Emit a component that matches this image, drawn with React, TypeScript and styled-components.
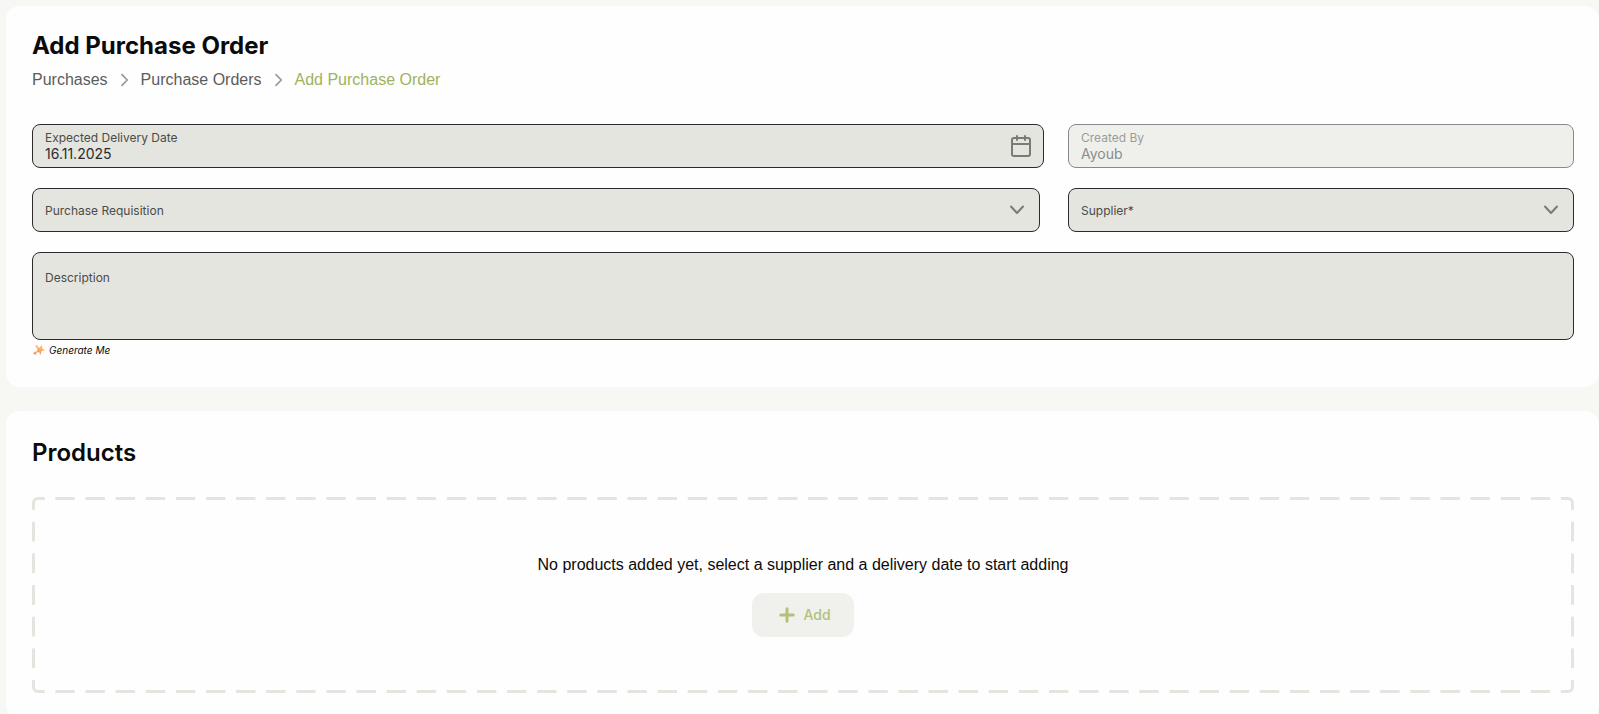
import React from "react";
import styled, { createGlobalStyle } from "styled-components";

const GlobalStyle = createGlobalStyle`
  *, *::before, *::after { box-sizing: border-box; }
  html { scrollbar-width: none; }
  body {
    margin: 0;
    background: #f7f8f3;
    color: #0b0b0b;
    font-family: "Liberation Sans", Arial, sans-serif;
    font-size: 16px;
    line-height: 24px;
  }
`;

const Page = styled.main`
  display: flex;
  flex-direction: column;
  gap: 24px;
  padding: 6px 0 6px 6px;
`;

const Card = styled.section`
  background: #fefefe;
  border-radius: 14px;
  padding: 24px 25px 26px 26px;
`;

const Title = styled.h1`
  margin: 0;
  font: 700 24px/32px Inter, sans-serif;
`;

const Subtitle = styled.h2`
  margin: 2px 0 28px;
  font: 600 24px/32px Inter, sans-serif;
`;

const Breadcrumb = styled.nav`
  display: flex;
  align-items: center;
  gap: 12px;
  margin: 6px 0 32px;
`;

const Crumb = styled.a<{ $current?: boolean }>`
  color: ${(p) => (p.$current ? "#a0b25c" : "#5c5c5c")};
  text-decoration: none;
`;

const Form = styled.form`
  display: grid;
  grid-template-columns: 2fr 1fr;
  gap: 20px 24px;
`;

const Field = styled.div<{ $disabled?: boolean; $inset?: boolean }>`
  display: grid;
  grid-template-columns: 1fr auto;
  align-items: center;
  height: 44px;
  margin-right: ${(p) => (p.$inset ? "4px" : "0")};
  padding: 0 12px;
  border: 1px solid #2b2b2b;
  border-radius: 8px;
  background: #e4e5df;
  color: #7a7a76;
  opacity: ${(p) => (p.$disabled ? 0.55 : 1)};
`;

const Stack = styled.div`
  display: flex;
  flex-direction: column;
  min-width: 0;
`;

const Label = styled.label`
  color: #4b4b49;
  font: 12px/16px Inter, sans-serif;
`;

const TextInput = styled.input`
  width: 100%;
  height: 16px;
  padding: 0;
  border: 0;
  outline: 0;
  background: transparent;
  color: #2b2b2b;
  font: 14px/16px Inter, sans-serif;
`;

const SelectLabel = styled(Label)`
  grid-area: 1 / 1;
  padding-top: 2px;
  pointer-events: none;
`;

const Select = styled.select`
  grid-area: 1 / 1 / 2 / 3;
  width: 100%;
  height: 42px;
  border: 0;
  outline: 0;
  appearance: none;
  background: transparent;
  color: #2b2b2b;
  font: 14px/16px Inter, sans-serif;
`;

const SelectIcon = styled.svg`
  grid-area: 1 / 2;
  margin-right: 2px;
  pointer-events: none;
`;

const Wide = styled.div`
  grid-column: 1 / -1;
`;

const AreaField = styled.div`
  display: flex;
  flex-direction: column;
  height: 88px;
  padding: 17px 12px 6px;
  border: 1px solid #2b2b2b;
  border-radius: 8px;
  background: #e4e5df;
`;

const TextArea = styled.textarea`
  flex: 1;
  padding: 0;
  border: 0;
  outline: 0;
  resize: none;
  background: transparent;
  font: 14px/16px Inter, sans-serif;
`;

const GenerateButton = styled.button`
  display: flex;
  align-items: center;
  gap: 4px;
  margin: 2px 0 3px;
  padding: 0 1px;
  border: 0;
  background: none;
  color: #0b0b0b;
  cursor: pointer;
  font: italic 10px/16px Inter, sans-serif;
`;

const EmptyState = styled.div`
  position: relative;
  display: flex;
  flex-direction: column;
  align-items: center;
  justify-content: center;
  gap: 16px;
  height: 196px;
  border: 3px solid #e4e5df;
  border-radius: 6px;

  /* Gaps that break the outline into long dashes. */
  &::before,
  &::after {
    content: "";
    position: absolute;
    pointer-events: none;
    --stops: transparent 10px, #fefefe 10px calc(100% - 10px), transparent calc(100% - 10px);
  }
  &::before {
    inset: -3px 0;
    background:
      linear-gradient(90deg, var(--stops)) left top / 30px 3px round no-repeat,
      linear-gradient(90deg, var(--stops)) left bottom / 30px 3px round no-repeat;
  }
  &::after {
    inset: 0 -3px;
    background:
      linear-gradient(180deg, var(--stops)) left top / 3px 30px no-repeat round,
      linear-gradient(180deg, var(--stops)) right top / 3px 30px no-repeat round;
  }
`;

const Message = styled.p`
  margin: 0;
`;

const AddButton = styled.button`
  display: flex;
  align-items: center;
  justify-content: center;
  gap: 8px;
  height: 44px;
  padding: 0 23px 0 27px;
  border: 0;
  border-radius: 12px;
  background: #f0f1ed;
  color: #b2c07c;
  font: 500 14px/20px Inter, sans-serif;
`;

const CrumbChevron = () => (
  <svg width="9" height="14" viewBox="0 0 9 14" fill="none" stroke="#9a9a9a" strokeWidth="1.7" aria-hidden="true">
    <path d="M1.500 1.200 7.200 7 1.500 12.800" />
  </svg>
);

const DownChevron = () => (
  <SelectIcon width="16" height="10" viewBox="0 0 16 10" fill="none" stroke="currentColor" strokeWidth="2" strokeLinecap="round" strokeLinejoin="round" aria-hidden="true">
    <path d="M2 1.500 8 8l6-6.500" />
  </SelectIcon>
);

const CalendarIcon = () => (
  <svg width="20" height="22" viewBox="0 0 20 22" fill="none" stroke="currentColor" strokeWidth="2" strokeLinecap="round" strokeLinejoin="round" aria-hidden="true">
    <rect x="1" y="3" width="18" height="18" rx="2" />
    <path d="M6 1v4M14 1v4M1 9h18" />
  </svg>
);

const SparkIcon = () => (
  <svg width="12" height="12" viewBox="0 0 24 24" aria-hidden="true">
    <defs>
      <linearGradient id="spark" x1="0" y1="1" x2="1" y2="0">
        <stop offset="0.1" stopColor="#f27f6f" />
        <stop offset="0.55" stopColor="#fbab62" />
        <stop offset="1" stopColor="#ffdc6b" />
      </linearGradient>
    </defs>
    <path
      fill="url(#spark)"
      d="M18 1 18.500 8.500 24 13 17.500 14 15 22 12 16 5 17.500 9 12 7.500 6 13 7.500zM7 1l1 2.500L11 4 8.500 5.800 8 9 6.500 6.200 4 6l2-2zM4 14l1.200 3L8 18l-2.500 1.500L4.500 23 3 20 0 19l2.500-1.800z"
    />
  </svg>
);

const PlusIcon = () => (
  <svg width="16" height="16" viewBox="0 0 16 16" fill="none" stroke="currentColor" strokeWidth="3" strokeLinecap="round" aria-hidden="true">
    <path d="M8 1.800v12.400M1.800 8h12.400" />
  </svg>
);

export default function App() {
  return (
    <>
      <GlobalStyle />
      <Page>
        <Card>
          <Title>Add Purchase Order</Title>
          <Breadcrumb aria-label="Breadcrumb">
            <Crumb href="#purchases">Purchases</Crumb>
            <CrumbChevron />
            <Crumb href="#orders">Purchase Orders</Crumb>
            <CrumbChevron />
            <Crumb href="#add" $current aria-current="page">Add Purchase Order</Crumb>
          </Breadcrumb>
          <Form>
            <Field>
              <Stack>
                <Label htmlFor="date">Expected Delivery Date</Label>
                <TextInput id="date" defaultValue="16.11.2025" />
              </Stack>
              <CalendarIcon />
            </Field>
            <Field $disabled>
              <Stack>
                <Label htmlFor="creator">Created By</Label>
                <TextInput id="creator" defaultValue="Ayoub" disabled />
              </Stack>
            </Field>
            <Field $inset>
              <SelectLabel htmlFor="requisition">Purchase Requisition</SelectLabel>
              <Select id="requisition" />
              <DownChevron />
            </Field>
            <Field>
              <SelectLabel htmlFor="supplier">Supplier*</SelectLabel>
              <Select id="supplier" required />
              <DownChevron />
            </Field>
            <Wide>
              <AreaField>
                <Label htmlFor="description">Description</Label>
                <TextArea id="description" />
              </AreaField>
              <GenerateButton type="button">
                <SparkIcon />
                Generate Me
              </GenerateButton>
            </Wide>
          </Form>
        </Card>
        <Card>
          <Subtitle>Products</Subtitle>
          <EmptyState>
            <Message>No products added yet, select a supplier and a delivery date to start adding</Message>
            <AddButton type="button" disabled>
              <PlusIcon />
              Add
            </AddButton>
          </EmptyState>
        </Card>
      </Page>
    </>
  );
}
